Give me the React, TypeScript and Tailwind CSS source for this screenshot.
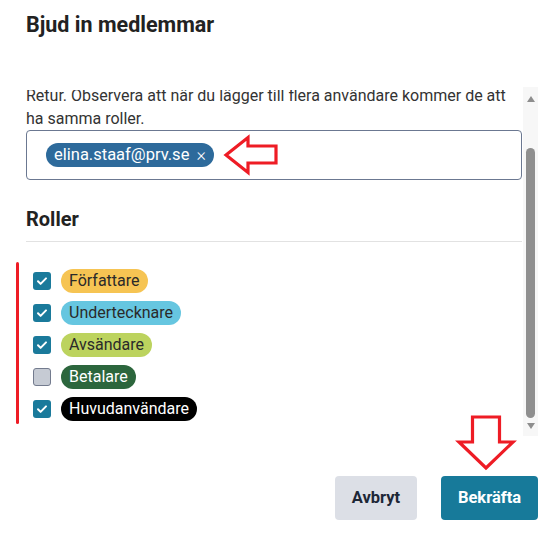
const roles = [
  { name: "Författare", cls: "bg-[#f6c453] text-[#2a2a2a]", checked: true },
  { name: "Undertecknare", cls: "bg-[#66c6e0] text-[#2a2a2a]", checked: true },
  { name: "Avsändare", cls: "bg-[#bcd35e] text-[#2a2a2a]", checked: true },
  { name: "Betalare", cls: "bg-[#2c663d] text-white", checked: false },
  { name: "Huvudanvändare", cls: "bg-black text-white", checked: true },
];

function Checkbox({ checked }: { checked: boolean }) {
  if (!checked) {
    return <div className="w-[18px] h-[18px] rounded-[3px] bg-[#c6cbd4] border border-[#737b8e]" />;
  }
  return (
    <div className="w-[18px] h-[18px] rounded-[3px] bg-[#1a7a9b] flex items-center justify-center">
      <svg width="12" height="12" viewBox="0 0 12 12" fill="none">
        <path d="M2 6.3l2.6 2.6L10 3.4" stroke="white" strokeWidth="2" strokeLinecap="round" strokeLinejoin="round" />
      </svg>
    </div>
  );
}

function Scrollbar() {
  return (
    <div className="ml-[1px] w-[15px] h-[349px] bg-[#f7f7f7] flex flex-col items-center pt-[9px]">
      <svg width="8" height="6" viewBox="0 0 8 6">
        <path d="M0 6L4 0L8 6Z" fill="#8e8e8e" />
      </svg>
      <div className="mt-[46px] w-[9px] h-[270px] rounded-full bg-[#8f8f8f]" />
      <svg className="mt-[5px]" width="8" height="6" viewBox="0 0 8 6">
        <path d="M0 0L4 6L8 0Z" fill="#8e8e8e" />
      </svg>
    </div>
  );
}

export default function App() {
  return (
    <div className="relative w-[551px] h-[534px] bg-white font-['Roboto',sans-serif] text-[#262626] overflow-hidden">
      <h1 className="pt-[11px] px-[26px] text-[21.5px] leading-[28px] font-bold text-[#222]">Bjud in medlemmar</h1>

      <div className="mt-[48px] ml-[26px] flex">
        <div className="w-[496px] pt-[3px]">
          <div className="h-[346px] overflow-hidden">
            <p className="mt-[-6px] text-[16px] leading-[23px] text-[#333]">
              Retur. Observera att när du lägger till flera användare kommer de att
              <br />
              ha samma roller.
            </p>
            <div className="h-[50px] border border-[#6b7891] rounded-[4px] pl-[19px] pt-[12px]">
              <span className="inline-flex items-center h-[24px] rounded-full bg-[#2d6a9b] text-white text-[16.5px] pl-[8px] pr-[8px] gap-[7px]">
                elina.staaf@prv.se
                <span className="text-[18px] leading-none font-light">×</span>
              </span>
            </div>
            <h2 className="mt-[27px] text-[20px] leading-[24px] font-bold text-[#222]">Roller</h2>
            <div className="mt-[10px] h-px bg-[#e2e2e2]" />
            <ul className="mt-[23px] pl-[7px] flex flex-col">
              {roles.map((r) => (
                <li key={r.name} className="h-[32px] flex items-center gap-[10px]">
                  <Checkbox checked={r.checked} />
                  <span className={`h-[24px] px-[8px] rounded-full inline-flex items-center text-[16px] ${r.cls}`}>
                    {r.name}
                  </span>
                </li>
              ))}
            </ul>
          </div>
        </div>
        <Scrollbar />
      </div>

      <div className="mt-[40px] pr-[13px] flex justify-end gap-[24px]">
        <button className="w-[82px] h-[44px] rounded-[4px] bg-[#dcdfe6] text-[#1d2736] text-[16.5px] font-bold">Avbryt</button>
        <button className="w-[97px] h-[44px] rounded-[4px] bg-[#177a9a] text-white text-[16.5px] font-bold">Bekräfta</button>
      </div>

      {/* red annotations */}
      <div className="absolute left-[16px] top-[262px] w-[3px] h-[162px] bg-[#ee1c25] rounded-full" />
      <svg className="absolute left-[220px] top-[132px]" width="62" height="46" viewBox="220 132 62 46">
        <path d="M226 155L248 137.5V146H276V163H248V172.5Z" fill="none" stroke="#ee1c25" strokeWidth="3.2" strokeLinejoin="miter" />
      </svg>
      <svg className="absolute left-[454px] top-[412px]" width="64" height="62" viewBox="454 412 64 62">
        <path d="M472.5 417H499.5V442H513L486 468L459 442H472.5Z" fill="none" stroke="#ee1c25" strokeWidth="3.2" strokeLinejoin="miter" />
      </svg>
    </div>
  );
}
